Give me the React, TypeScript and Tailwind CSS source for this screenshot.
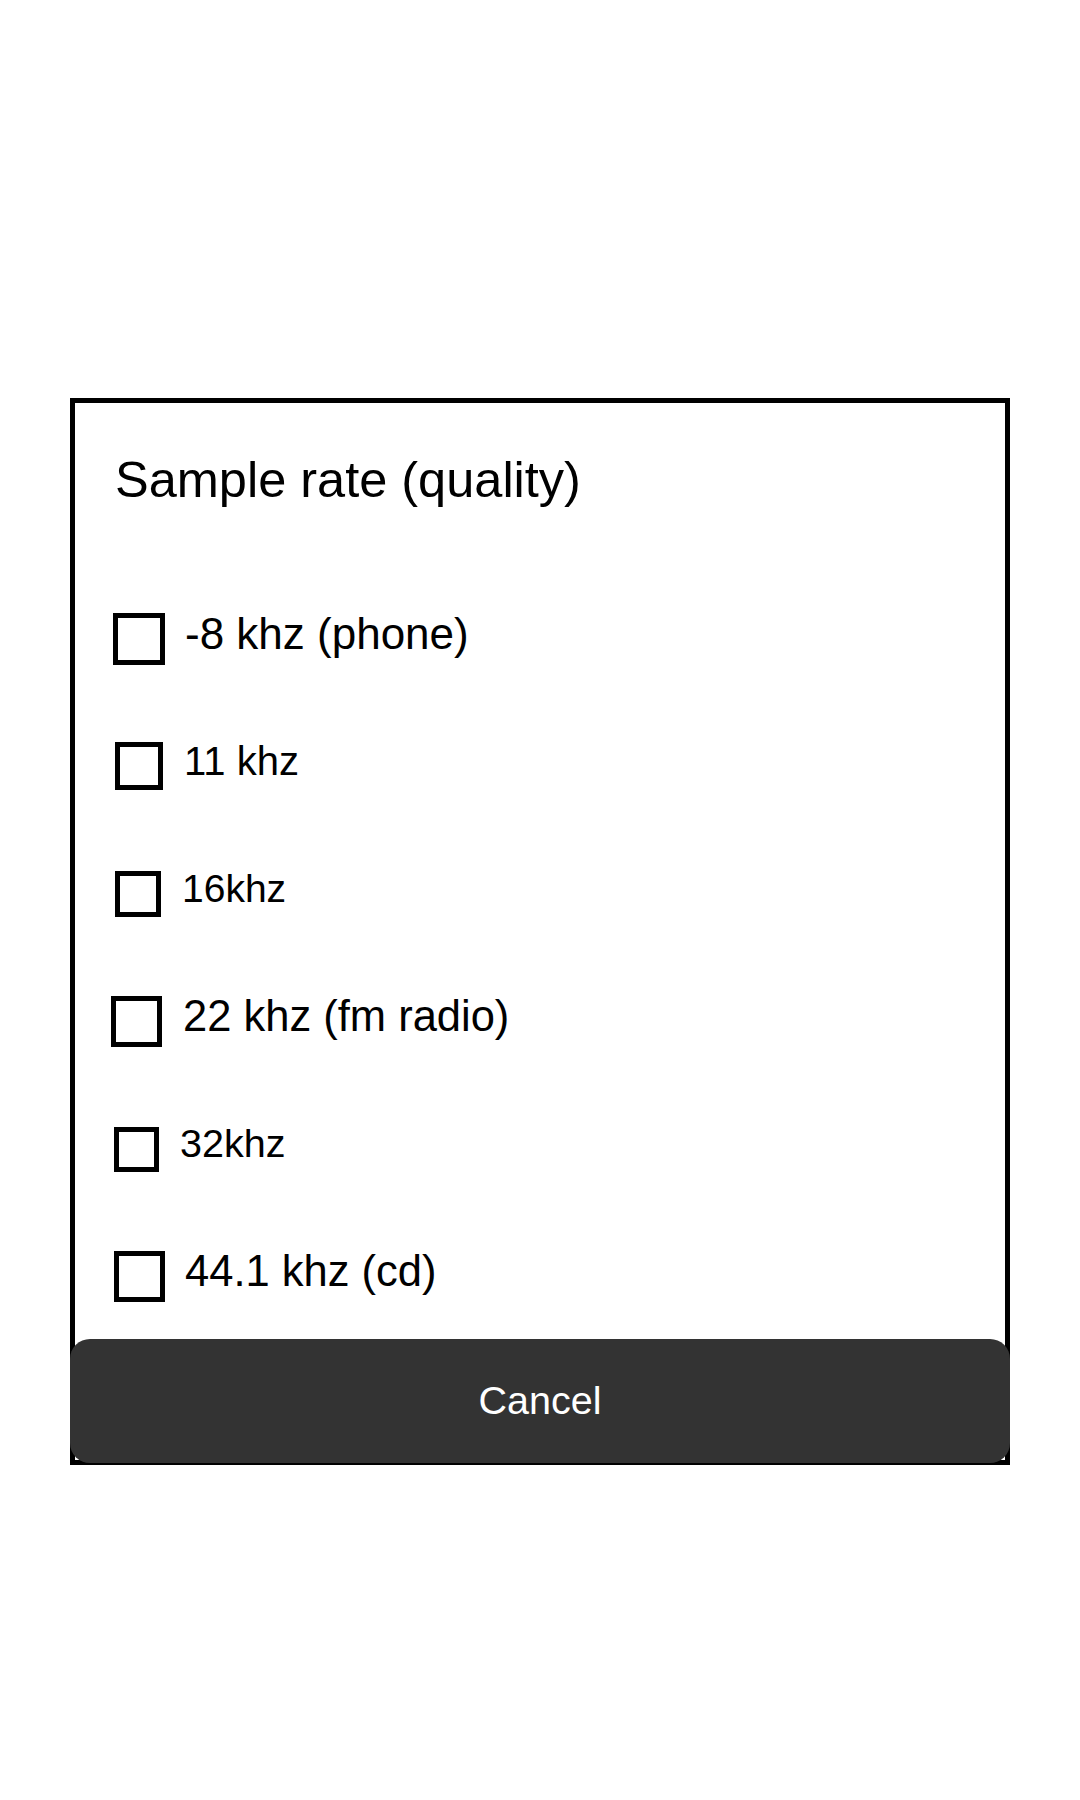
import React from 'react'

interface Rate {
  label: string
  box: string
  text: string
  gap: string
  pad: string
}

// sizes differ a little row to row, as in the mock
const RATES: Rate[] = [
  { label: '-8 khz (phone)', box: 'w-[52px] h-[52px]', text: 'text-[44px]', gap: 'gap-[20px]', pad: 'pl-[38px]' },
  { label: '11 khz', box: 'w-[48px] h-[48px]', text: 'text-[40px]', gap: 'gap-[21px]', pad: 'pl-[40px]' },
  { label: '16khz', box: 'w-[46px] h-[46px]', text: 'text-[39px]', gap: 'gap-[21px]', pad: 'pl-[40px]' },
  { label: '22 khz (fm radio)', box: 'w-[51px] h-[51px]', text: 'text-[43.5px]', gap: 'gap-[21px]', pad: 'pl-[36px]' },
  { label: '32khz', box: 'w-[45px] h-[45px]', text: 'text-[39.5px]', gap: 'gap-[21px]', pad: 'pl-[39px]' },
  { label: '44.1 khz (cd)', box: 'w-[51px] h-[51px]', text: 'text-[43.5px]', gap: 'gap-[20px]', pad: 'pl-[39px]' },
]

export default function App() {
  return (
    <div className="min-h-[1800px] bg-white pt-[398px] font-['Liberation_Sans',Arial,sans-serif] text-black">
      <div className="mx-auto flex w-[940px] flex-col border-[5px] border-black bg-white">

        {/* Title */}
        <h1 className="pl-[40px] pt-[52px] text-[50.5px] font-normal leading-[50px]">
          Sample rate (quality)
        </h1>

        {/* Options */}
        <div className="mt-[70px] flex flex-col">
          {RATES.map(r => (
            <label key={r.label} className={`flex h-[127.6px] items-center ${r.gap} ${r.pad}`}>
              <span className={`shrink-0 border-[5px] border-black bg-white ${r.box}`} />
              <span className={`${r.text} mb-[10px] leading-none`}>{r.label}</span>
            </label>
          ))}
        </div>

        {/* Cancel */}
        <button className="-mx-[5px] -mb-[3px] -mt-[2px] flex h-[124px] items-center justify-center rounded-[20px] bg-[#333333] text-[39.5px] text-white">
          Cancel
        </button>
      </div>
    </div>
  )
}
